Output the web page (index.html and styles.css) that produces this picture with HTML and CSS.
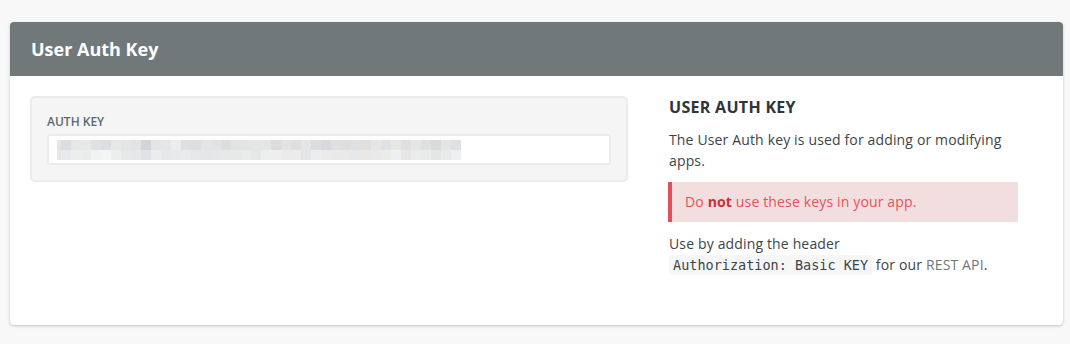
FILE: index.html
```html
<!DOCTYPE html>
<html lang="en">

<head>
  <meta charset="UTF-8">
  <meta name="viewport" content="width=device-width, initial-scale=1.0">
  <title>User Auth Key</title>
  <link rel="stylesheet" href="styles.css">
</head>

<body>
  <div class="card">
    <div class="card_head">User Auth Key</div>
    <div class="card_body">
      <div class="key_panel">
        <div class="key_label">AUTH KEY</div>
        <div class="key_input">
          <div class="key_blur"></div>
        </div>
      </div>
      <div class="help">
        <h3 class="help_title">USER AUTH KEY</h3>
        <p class="help_text">The User Auth key is used for adding or modifying apps.</p>
        <div class="alert">Do <b>not</b> use these keys in your app.</div>
        <p class="help_text">Use by adding the header<br><code>Authorization: Basic KEY</code> for our <a href="#">REST API</a>.</p>
      </div>
    </div>
  </div>
</body>

</html>
```

FILE: styles.css
```css
body {
  margin: 0;
  padding: 22px 7px 20px 10px;
  background: #f8f8f8;
  font-family: 'Open Sans', sans-serif;
  color: #3d4448;
}

/* 卡片 */
.card {
  background: #fff;
  border-radius: 4px;
  box-shadow: 0 1px 3px rgba(0, 0, 0, .22);
  overflow: hidden;
}

.card_head {
  background: #717879;
  color: #fff;
  height: 54px;
  line-height: 54px;
  padding-left: 21px;
  font-size: 18px;
  font-weight: 700;
}

.card_body {
  display: flex;
  padding: 20px 45px 50px 20px;
  gap: 41px;
}

/* 左邊 */
.key_panel {
  width: 598px;
  height: 86px;
  background: #f5f5f5;
  border: 2px solid #ebebeb;
  border-radius: 5px;
  padding: 0 15px;
  box-sizing: border-box;
}

.key_label {
  margin-top: 16px;
  font-size: 12px;
  font-weight: 600;
  color: #5d686d;
  line-height: 16px;
}

.key_input {
  margin-top: 4px;
  height: 31px;
  background: #fff;
  border: 2px solid #ececec;
  border-radius: 3px;
  box-sizing: border-box;
  padding: 4px 0 0 8px;
}

.key_blur {
  width: 404px;
  height: 20px;
  background:
    linear-gradient(90deg,
      #e6e6e6 0 4px, #e8e9ea 4px 14px, #eceeee 14px 24px, #eaebeb 24px 34px, #f1f2f3 34px 44px, #f3f4f4 44px 54px,
      #eceeee 54px 64px, #e7e8e8 64px 74px, #e6e7e8 74px 84px, #e1e2e4 84px 94px, #ececec 94px 104px,
      #e7e8e9 104px 114px, #e8e9e9 114px 124px, #e9eaeb 124px 134px, #e6e7e8 134px 144px, #e5e6e7 144px 154px,
      #e6e7e8 154px 164px, #e7e8e8 164px 174px, #e8e8e9 174px 184px, #e9eaeb 184px 194px, #e6e7e7 194px 204px,
      #ebedee 204px 214px, #eeeeee 214px 224px, #ecebea 224px 234px, #eaebeb 234px 244px, #e4e5e6 244px 254px,
      #ecedee 254px 264px, #eaeaeb 264px 274px, #e8e9ea 274px 284px, #e9e9ea 284px 294px, #e6e7e8 294px 304px,
      #e9e8e6 304px 314px, #e8e9e9 314px 324px, #ebebeb 324px 334px, #eeeff0 334px 344px, #e6e6e6 344px 354px,
      #eaebeb 354px 364px, #e9eaeb 364px 374px, #e4e5e5 374px 384px, #e9eaea 384px 394px, #eff0f1 394px 404px) 0 10px / 100% 10px no-repeat,
    linear-gradient(90deg,
      #e4e4e4 0 4px, #dcdde0 4px 14px, #e6e7e9 14px 24px, #e8e8e6 24px 34px, #dfe0e2 34px 44px, #dcdde0 44px 54px,
      #e6e7e7 54px 64px, #e3e4e5 64px 74px, #e1e2e4 74px 84px, #d3d4d8 84px 94px, #e3e4e5 94px 104px,
      #e5e6e8 104px 114px, #ebecec 114px 124px, #dedfe1 124px 134px, #dcdee0 134px 144px, #e2e5e6 144px 154px,
      #e1e2e3 154px 164px, #dcdddf 164px 174px, #e2e3e4 174px 184px, #e3e5e5 184px 194px, #e6e5e3 194px 204px,
      #e4e5e6 204px 214px, #dcdcdd 214px 224px, #e2e3e4 224px 234px, #dfdfdf 234px 244px, #e4e5e6 244px 254px,
      #dcdde0 254px 264px, #d8d9dc 264px 274px, #dedfe1 274px 284px, #dddee0 284px 294px, #e0e1e2 294px 304px,
      #dfdfe0 304px 314px, #e6e6e4 314px 324px, #e0e1e2 324px 334px, #e6e6e4 334px 344px, #dedfe1 344px 354px,
      #e5e5e4 354px 364px, #dedfe0 364px 374px, #d9dadb 374px 384px, #e3e4e3 384px 394px, #dfe0e2 394px 404px) 0 0 / 100% 10px no-repeat;
}

/* 右邊說明 */
.help {
  flex: 1;
}

.help_title {
  margin: 1px 0 0;
  font-size: 16px;
  font-weight: 700;
  letter-spacing: .3px;
  color: #2f3438;
  line-height: 20px;
}

.help_text {
  margin: 12px 0 0;
  font-size: 14px;
  letter-spacing: .15px;
  line-height: 21px;
  color: #3d4448;
}

.alert {
  margin: 11px 0 0 -1px;
  width: 350px;
  box-sizing: border-box;
  height: 40px;
  line-height: 40px;
  padding-left: 13px;
  background: #f2dede;
  border-left: 4px solid #e3505a;
  color: #e4535c;
  font-size: 14px;
  letter-spacing: .15px;
}

.alert + .help_text {
  margin-top: 11px;
}

.alert b {
  font-weight: 700;
  color: #c9303a;
}

code {
  font-family: 'DejaVu Sans Mono', monospace;
  font-size: 13.5px;
  line-height: 1;
  letter-spacing: 0;
  background: #f6f6f6;
  border-radius: 3px;
  padding: 2px 4px;
}

.help_text a {
  color: #6f7779;
  text-decoration: none;
}
```
